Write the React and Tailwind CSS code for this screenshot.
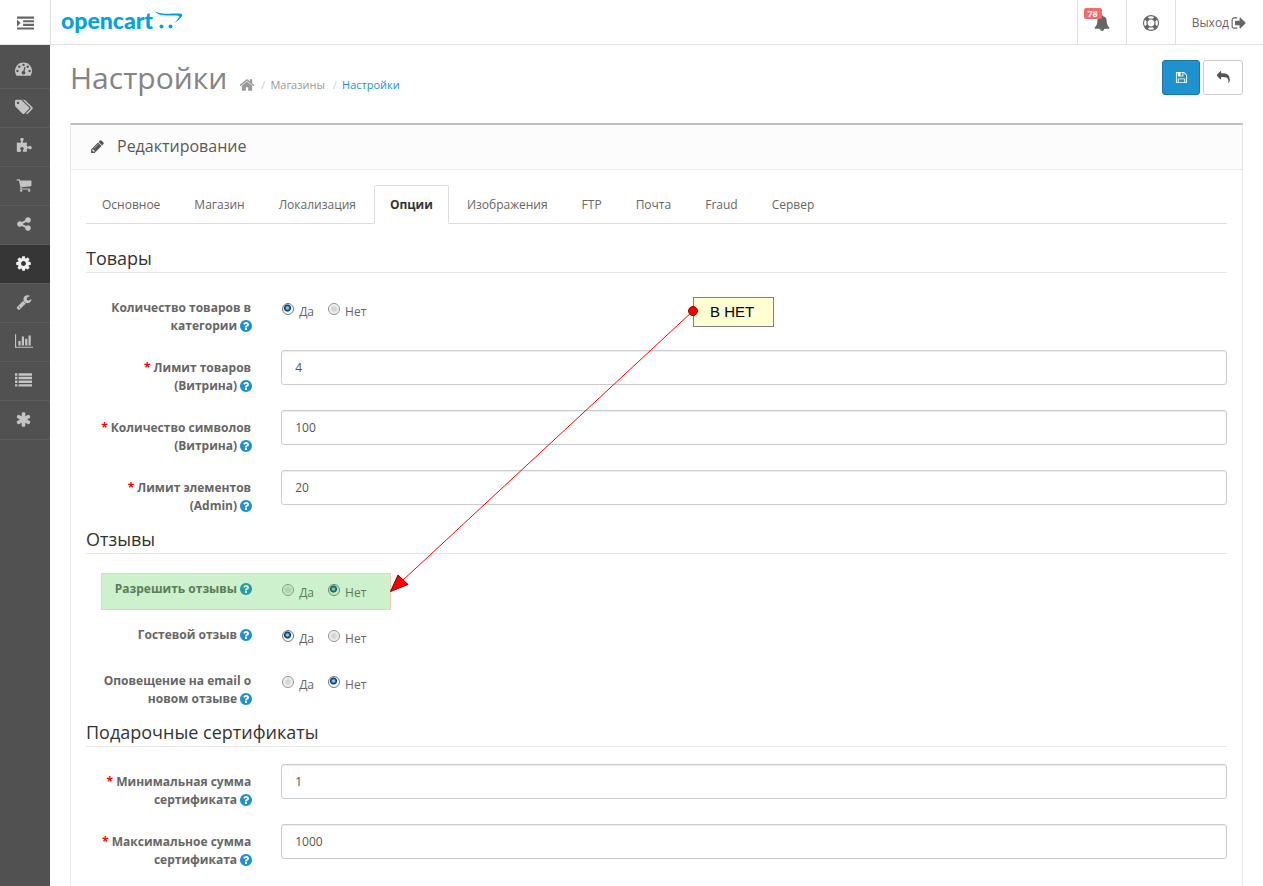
import { useState } from "react";

const icons = {
  dashboard: "M384 1152q0-53-37.5-90.5t-90.5-37.5-90.5 37.5-37.5 90.5 37.5 90.5 90.5 37.5 90.5-37.5 37.5-90.5zm192-448q0-53-37.5-90.5t-90.5-37.5-90.5 37.5-37.5 90.5 37.5 90.5 90.5 37.5 90.5-37.5 37.5-90.5zm428 481l101-382q6-26-7.5-48.5t-38.5-29.5-48 6.5-30 39.5l-101 382q-60 5-107 43.5t-63 98.5q-20 77 20 146t117 89 146-20 89-117q16-60-6-117t-72-91zm660-33q0-53-37.5-90.5t-90.5-37.5-90.5 37.5-37.5 90.5 37.5 90.5 90.5 37.5 90.5-37.5 37.5-90.5zm-640-640q0-53-37.5-90.5t-90.5-37.5-90.5 37.5-37.5 90.5 37.5 90.5 90.5 37.5 90.5-37.5 37.5-90.5zm448 192q0-53-37.5-90.5t-90.5-37.5-90.5 37.5-37.5 90.5 37.5 90.5 90.5 37.5 90.5-37.5 37.5-90.5zm320 448q0 261-141 483-19 29-54 29h-1402q-35 0-54-29-141-221-141-483 0-182 71-348t191-286 286-191 348-71 348 71 286 191 191 286 71 348z",
  tags: "M448 448q0-53-37.5-90.5t-90.5-37.5-90.5 37.5-37.5 90.5 37.5 90.5 90.5 37.5 90.5-37.5 37.5-90.5zm1067 576q0 53-37 90l-491 492q-39 37-91 37-53 0-90-37l-715-716q-38-37-64.5-101t-26.5-117v-416q0-52 38-90t90-38h416q53 0 117 26.5t102 64.5l715 714q37 39 37 91zm384 0q0 53-37 90l-491 492q-39 37-91 37-36 0-59-14t-53-45l470-470q37-37 37-90 0-52-37-91l-715-714q-38-38-102-64.5t-117-26.5h224q53 0 117 26.5t102 64.5l715 714q37 39 37 91z",
  puzzle: "M1755 1083q0 81-44.5 135t-123.5 54q-41 0-77.5-17.5t-59-38-56.5-38-71-17.5q-110 0-110 124 0 39 16 115t15 115v5q-22 0-33 1-34 3-97.5 11.5t-115.5 13.5-98 5q-61 0-103-26.5t-42-83.5q0-37 17.5-71t38-56.5 38-59 17.5-77.5q0-79-54-123.5t-135-44.5q-84 0-143 45.5t-59 127.5q0 43 15 83t33.5 64.5 33.5 53 15 50.5q0 45-46 89-37 35-117 35-95 0-245-24-9-2-27.5-4t-27.5-4l-13-2q-1 0-3-1-2 0-2-1v-1024q2 1 17.5 3.5t34 5 21.5 3.5q150 24 245 24 80 0 117-35 46-44 46-89 0-22-15-50.5t-33.5-53-33.5-64.5-15-83q0-82 59-127.5t144-45.5q80 0 134 44.5t54 123.5q0 41-17.5 77.5t-38 59-38 56.5-17.5 71q0 57 42 83.5t103 26.5q64 0 180-15t163-17v2q-1 2-3.5 17.5t-5 34-3.5 21.5q-24 150-24 245 0 80 35 117 44 46 89 46 22 0 50.5-15t53-33.5 64.5-33.5 83-15q82 0 127.5 59t45.5 143z",
  cart: "M704 1536q0 52-38 90t-90 38-90-38-38-90 38-90 90-38 90 38 38 90zm896 0q0 52-38 90t-90 38-90-38-38-90 38-90 90-38 90 38 38 90zm128-1088v512q0 24-16.5 42.5t-40.5 21.5l-1044 122q13 60 13 70 0 16-24 64h920q26 0 45 19t19 45-19 45-45 19h-1024q-26 0-45-19t-19-45q0-11 8-31.5t16-36 21.5-40 15.5-29.5l-177-823h-204q-26 0-45-19t-19-45 19-45 45-19h256q16 0 28.5 6.5t19.5 15.5 13 24.5 8 26 5.5 29.5 4.5 26h1201q26 0 45 19t19 45z",
  share: "M1344 1024q133 0 226.5 93.5t93.5 226.5-93.5 226.5-226.5 93.5-226.5-93.5-93.5-226.5q0-12 2-34l-360-180q-92 86-218 86-133 0-226.5-93.5t-93.5-226.5 93.5-226.5 226.5-93.5q126 0 218 86l360-180q-2-22-2-34 0-133 93.5-226.5t226.5-93.5 226.5 93.5 93.5 226.5-93.5 226.5-226.5 93.5q-126 0-218-86l-360 180q2 22 2 34t-2 34l360 180q92-86 218-86z",
  cog: "M1152 896q0-106-75-181t-181-75-181 75-75 181 75 181 181 75 181-75 75-181zm512-109v222q0 12-8 23t-20 13l-185 28q-19 54-39 91 35 50 107 138 10 12 10 25t-9 23q-27 37-99 108t-94 71q-12 0-26-9l-138-108q-44 23-91 38-16 136-29 186-7 28-36 28h-222q-14 0-24.5-8.5t-11.5-21.5l-28-184q-49-16-90-37l-141 107q-10 9-25 9-14 0-25-11-126-114-165-168-7-10-7-23 0-12 8-23 15-21 51-66.5t54-70.5q-27-50-41-99l-183-27q-13-2-21-12.5t-8-23.5v-222q0-12 8-23t19-13l186-28q14-46 39-92-40-57-107-138-10-12-10-24 0-10 9-23 26-36 98.5-107.5t94.5-71.5q13 0 26 10l138 107q44-23 91-38 16-136 29-186 7-28 36-28h222q14 0 24.5 8.5t11.5 21.5l28 184q49 16 90 37l142-107q9-9 24-9 13 0 25 10 129 119 165 170 7 8 7 22 0 12-8 23-15 21-51 66.5t-54 70.5q26 50 41 98l183 28q13 2 21 12.5t8 23.5z",
  wrench: "M448 1472q0-26-19-45t-45-19-45 19-19 45 19 45 45 19 45-19 19-45zm644-420l-682 682q-37 37-90 37-52 0-91-37l-106-108q-38-36-38-90 0-53 38-91l681-681q39 98 114.5 173.5t173.5 114.5zm634-435q0 39-23 106-47 134-164.5 217.5t-258.5 83.5q-185 0-316.5-131.5t-131.5-316.5 131.5-316.5 316.5-131.5q58 0 121.5 16.5t107.5 46.5q16 11 16 28t-16 28l-293 169v224l193 107q5-3 79-48.5t135.5-81 70.5-35.5q15 0 23.5 10t8.5 25z",
  chart: "M640 896v512h-256v-512h256zm384-512v1024h-256v-1024h256zm1024 1152v128h-2048v-1536h128v1408h1920zm-640-896v768h-256v-768h256zm384-384v1152h-256v-1152h256z",
  list: "M0 128h256v256H0zM384 128h1408v256H384zM0 512h256v256H0zM384 512h1408v256H384zM0 896h256v256H0zM384 896h1408v256H384zM0 1280h256v256H0zM384 1280h1408v256H384z",
  asterisk: "M1546 1050q46 26 59.5 77.5t-12.5 97.5l-64 110q-26 46-77.5 59.5t-97.5-12.5l-266-153v307q0 52-38 90t-90 38h-128q-52 0-90-38t-38-90v-307l-266 153q-46 26-97.5 12.5t-77.5-59.5l-64-110q-26-46-12.5-97.5t59.5-77.5l266-154-266-154q-46-26-59.5-77.5t12.5-97.5l64-110q26-46 77.5-59.5t97.5 12.5l266 153v-307q0-52 38-90t90-38h128q52 0 90 38t38 90v307l266-153q46-26 97.5-12.5t77.5 59.5l64 110q26 46 12.5 97.5t-59.5 77.5l-266 154z",
  indent: "M0 160h1792v224H0zM640 544h1152v224H640zM640 928h1152v224H640zM0 1312h1792v224H0zM0 512q0-32 40-10l320 320q28 26 0 52l-320 320q-40 22-40-10z",
  bell: "M912 1696q0-16-16-16-59 0-101.5-42.5t-42.5-101.5q0-16-16-16t-16 16q0 73 51.5 124.5t124.5 51.5q16 0 16-16zm816-288q0 52-38 90t-90 38h-448q0 106-75 181t-181 75-181-75-75-181h-448q-52 0-90-38t-38-90q50-42 91-88t85-119.5 74.5-158.5 50-206 19.5-260q0-152 117-282.5t307-158.5q-8-19-8-39 0-40 28-68t68-28 68 28 28 68q0 20-8 39 190 28 307 158.5t117 282.5q0 139 19.5 260t50 206 74.5 158.5 85 119.5 91 88z",
  support: "M896 0q182 0 348 71t286 191 191 286 71 348-71 348-191 286-286 191-348 71-348-71-286-191-191-286-71-348 71-348 191-286 286-191 348-71zm0 128q-190 0-361 90l194 194q82-28 167-28t167 28l194-194q-171-90-361-90zm-678 1129l194-194q-28-82-28-167t28-167l-194-194q-90 171-90 361t90 361zm678 407q190 0 361-90l-194-194q-82 28-167 28t-167-28l-194 194q171 90 361 90zm0-384q159 0 271.5-112.5t112.5-271.5-112.5-271.5-271.5-112.5-271.5 112.5-112.5 271.5 112.5 271.5 271.5 112.5zm484-217l194 194q90-171 90-361t-90-361l-194 194q28 82 28 167t-28 167z",
  signOut: "M704 1440q0 4 1 20t.5 26.5-3 23.5-10 19.5-20.5 6.5h-320q-119 0-203.5-84.5t-84.5-203.5v-704q0-119 84.5-203.5t203.5-84.5h320q13 0 22.5 9.5t9.5 22.5q0 4 1 20t.5 26.5-3 23.5-10 19.5-20.5 6.5h-320q-66 0-113 47t-47 113v704q0 66 47 113t113 47h312l11.5 1 11.5 3 8 5.5 7 9 2 13.5zm928-544q0 26-19 45l-544 544q-19 19-45 19t-45-19-19-45v-288h-448q-26 0-45-19t-19-45v-384q0-26 19-45t45-19h448v-288q0-26 19-45t45-19 45 19l544 544q19 19 19 45z",
  save: "M512 1536h768v-384h-768v384zm896 0h128v-896q0-14-10-38.5t-20-34.5l-281-281q-10-10-34-20t-39-10v416q0 40-28 68t-68 28h-576q-40 0-68-28t-28-68v-416h-128v1280h128v-416q0-40 28-68t68-28h832q40 0 68 28t28 68v416zm-384-928v-320q0-13-9.5-22.5t-22.5-9.5h-192q-13 0-22.5 9.5t-9.5 22.5v320q0 13 9.5 22.5t22.5 9.5h192q13 0 22.5-9.5t9.5-22.5zm640 32v928q0 40-28 68t-68 28h-1344q-40 0-68-28t-28-68v-1344q0-40 28-68t68-28h928q40 0 88 20t76 48l280 280q28 28 48 76t20 88z",
  reply: "M1792 1120q0 166-127 451-3 7-10.5 24t-13.5 30-13 22q-12 17-28 17-15 0-23.5-10t-8.5-25q0-9 2.5-26.5t2.5-23.5q5-68 5-123 0-112-19.5-200.5t-54-153.5-89-112-118-78-148.5-48-173-19.5-184-5.5h-224v256q0 26-19 45t-45 19-45-19l-512-512q-19-19-19-45t19-45l512-512q19-19 45-19t45 19 19 45v256h224q713 0 875 403 53 134 53 333z",
  home: "M1472 992v480q0 26-19 45t-45 19h-384v-384h-256v384h-384q-26 0-45-19t-19-45v-480q0-1 .5-3t.5-3l575-474 575 474q1 2 1 6zm223-69l-62 74q-8 9-21 11h-3q-13 0-21-7l-692-577-692 577q-12 8-24 7-13-2-21-11l-62-74q-8-10-7-23.5t11-21.5l719-599q32-26 76-26t76 26l244 204v-195q0-14 9-23t23-9h192q14 0 23 9t9 23v408l219 182q10 8 11 21.5t-7 23.5z",
  pencil: "M491 1536l91-91-235-235-91 91v107h128v128h107zm523-928q0-22-22-22-10 0-17 7l-542 542q-7 7-7 17 0 22 22 22 10 0 17-7l542-542q7-7 7-17zm-54-192l416 416-832 832h-416v-416zm683 96q0 53-37 90l-166 166-416-416 166-165q36-38 90-38 53 0 91 38l235 234q37 39 37 91z",
  question: "M1024 1376v-192q0-14-9-23t-23-9h-192q-14 0-23 9t-9 23v192q0 14 9 23t23 9h192q14 0 23-9t9-23zm256-672q0-88-55.5-163t-138.5-116-170-41q-243 0-371 213-15 24 8 42l132 100q7 6 19 6 16 0 25-12 53-68 86-92 34-24 86-24 48 0 85.5 26t37.5 59q0 38-20 61t-68 45q-63 28-115.5 86.5t-52.5 125.5v36q0 14 9 23t23 9h192q14 0 23-9t9-23q0-19 21.5-49.5t54.5-49.5q32-18 49-28.5t46-35 44.5-48 28-60.5 12.5-81zm384 192q0 209-103 385.5t-279.5 279.5-385.5 103-385.5-103-279.5-279.5-103-385.5 103-385.5 279.5-279.5 385.5-103 385.5 103 279.5 279.5 103 385.5z",
};

const Icon = ({ name, className, viewBox = "0 0 1792 1792" }) => (
  <svg viewBox={viewBox} className={className} fill="currentColor" aria-hidden="true">
    <path d={icons[name]} />
  </svg>
);

const menu = [
  { icon: "dashboard", title: "Панель состояния", size: "size-[17px]" },
  { icon: "tags", title: "Каталог", size: "size-[18px]", viewBox: "0 0 1920 1792" },
  { icon: "puzzle", title: "Дополнения", size: "size-4" },
  { icon: "cart", title: "Продажи", size: "size-4" },
  { icon: "share", title: "Маркетинг", size: "size-4" },
  { icon: "cog", title: "Система", size: "size-[17px]", active: true },
  { icon: "wrench", title: "Инструменты", size: "size-4" },
  { icon: "chart", title: "Отчеты", size: "h-4 w-[18px]", viewBox: "0 0 2048 1792" },
  { icon: "list", title: "Список", size: "size-[17px]" },
  { icon: "asterisk", title: "Прочее", size: "size-[17px]" },
];

const tabs = ["Основное", "Магазин", "Локализация", "Опции", "Изображения", "FTP", "Почта", "Fraud", "Сервер"];

const sections = [
  {
    title: "Товары",
    fields: [
      { name: "product_count", label: "Количество товаров в категории", type: "radio" },
      { name: "product_limit", label: "Лимит товаров (Витрина)", required: true },
      { name: "description_length", label: "Количество символов (Витрина)", required: true },
      { name: "limit_admin", label: "Лимит элементов (Admin)", required: true },
    ],
  },
  {
    title: "Отзывы",
    fields: [
      { name: "review_status", label: "Разрешить отзывы", type: "radio", highlight: true },
      { name: "review_guest", label: "Гостевой отзыв", type: "radio" },
      { name: "review_mail", label: "Оповещение на email о новом отзыве", type: "radio" },
    ],
  },
  {
    title: "Подарочные сертификаты",
    fields: [
      { name: "voucher_min", label: "Минимальная сумма сертификата", required: true },
      { name: "voucher_max", label: "Максимальное сумма сертификата", required: true },
    ],
  },
];

const Help = () => (
  <Icon name="question" viewBox="128 128 1536 1536" className="-mr-px inline-block size-3 align-[-2px] text-[#1e91cf]" />
);

const Radio = ({ name, value, checked, onChange, children }) => (
  <label className="flex items-start gap-[5px]">
    <input
      type="radio"
      name={name}
      value={value}
      checked={checked}
      onChange={onChange}
      className="size-3 appearance-none rounded-full border border-[#8e8f8f] bg-[radial-gradient(circle,#d6d6d6_0_2px,#ededed_4px,#fff_5px)] checked:border-[#6b7780] checked:bg-[radial-gradient(circle_at_45%_40%,#7fd0f4_0_1px,#1f6ca6_2px,#0b2f52_3px,#e8eef2_4px,#fff_5px)]"
    />
    <span className="leading-[18px]">{children}</span>
  </label>
);

const Field = ({ field, value, onChange }) => {
  const isRadio = field.type === "radio";
  const text = (
    <>
      {field.required && <span className="text-[#f00]">* </span>}
      {field.label} <Help />
    </>
  );
  const labelClass = "block w-1/6 px-[15px] pt-[9px] text-right font-bold leading-[18px]";

  return (
    <div
      className="relative -mx-[15px] flex min-h-[31px]"
      role={isRadio ? "radiogroup" : undefined}
      aria-labelledby={isRadio ? `label-${field.name}` : undefined}
    >
      {isRadio ? (
        <span id={`label-${field.name}`} className={labelClass}>{text}</span>
      ) : (
        <label htmlFor={field.name} className={labelClass}>{text}</label>
      )}
      <div className="w-5/6 px-[15px]">
        {isRadio ? (
          <div className="flex h-[31px] gap-[14px] pt-[13px] pl-px">
            <Radio name={field.name} value="1" checked={value === "1"} onChange={() => onChange("1")}>Да</Radio>
            <Radio name={field.name} value="0" checked={value === "0"} onChange={() => onChange("0")}>Нет</Radio>
          </div>
        ) : (
          <input
            id={field.name}
            type="text"
            value={value}
            onChange={(e) => onChange(e.target.value)}
            className="block h-[35px] w-full rounded-[3px] border border-[#ccc] bg-white px-[13px] text-[#555] shadow-[inset_0_1px_1px_rgba(0,0,0,0.075)]"
          />
        )}
      </div>
      {field.highlight && (
        <div className="pointer-events-none absolute top-[2px] left-[30px] h-[37px] w-[290px] border border-[#f8cbb8] bg-[rgba(56,196,56,0.25)] bg-clip-padding" />
      )}
    </div>
  );
};

const Logo = () => (
  <a href="#" className="flex text-[#00a3df]">
    <span className="font-['Lato',sans-serif] text-[23px] leading-[26px] font-black">opencart</span>
    <svg viewBox="0 0 28 20" className="mt-1 ml-[2px] h-5 w-7" fill="currentColor" aria-hidden="true">
      <path d="M0 .4C4 2.600 12 2.900 20 2.500c5-.2 8.500.1 7 2.600-1.300 2.300-4 4.500-7.200 7 1.700-2.300 3.700-4.400 4.200-6 .5-1.300-1.500-1.500-4.500-1.500C11 4.700 2.500 4.300 0 .4z" />
      <circle cx="6.500" cy="15.500" r="2" />
      <circle cx="15.500" cy="15.500" r="2" />
    </svg>
  </a>
);

// yellow note with the arrow going down to the reviews switch
const Note = () => (
  <div className="pointer-events-none absolute top-[297px] left-[390px]">
    <div className="ml-[303px] h-[30px] w-[81px] border border-[#808080] bg-[#ffffd2] pl-4 font-['Liberation_Sans',sans-serif] text-[15px] leading-7 text-black">
      В НЕТ
    </div>
    <svg viewBox="0 0 310 300" className="absolute top-0 left-0 h-[300px] w-[310px]" aria-hidden="true">
      <path d="M303 14L12 284" stroke="#f00" strokeWidth="1" fill="none" />
      <path d="M.5 294.500L8 278l10 9.500z" fill="#f00" stroke="#700" strokeWidth="1" />
      <circle cx="303" cy="14" r="4.500" fill="#f00" stroke="#900" strokeWidth="1" />
    </svg>
  </div>
);

const App = () => {
  const [activeTab, setActiveTab] = useState("Опции");
  const [form, setForm] = useState({
    product_count: "1",
    product_limit: "4",
    description_length: "100",
    limit_admin: "20",
    review_status: "0",
    review_guest: "1",
    review_mail: "0",
    voucher_min: "1",
    voucher_max: "1000",
  });

  return (
    <div className="relative flex min-h-screen flex-col bg-white font-['Open_Sans',sans-serif] text-xs text-[#666]">
      <header className="flex h-[45px] border-b border-[#e1e1e1]">
        <button type="button" aria-label="Меню" className="flex w-[51px] items-center justify-center border-r border-[#e1e1e1] pt-[2px]">
          <Icon name="indent" className="size-[17px]" />
        </button>
        <div className="flex-1 pt-[7px] pl-[10px]">
          <Logo />
        </div>
        <button type="button" aria-label="Уведомления" className="relative flex w-[49px] items-center justify-center border-l border-[#e1e1e1] pt-[2px]">
          <Icon name="bell" className="size-4" />
          <span className="absolute top-2 left-[6px] h-[11px] w-[18px] rounded-[2px] bg-[#f56b6b] text-center text-[9px] leading-[11px] font-bold text-white">78</span>
        </button>
        <button type="button" aria-label="Помощь" className="flex w-[49px] items-center justify-center border-l border-[#e1e1e1] pt-[2px]">
          <Icon name="support" className="size-4" />
        </button>
        <a href="#" className="flex items-center gap-[2px] border-l border-[#e1e1e1] px-4 pt-[2px]">
          Выход
          <Icon name="signOut" className="size-4" />
        </a>
      </header>

      <div className="flex flex-1">
        <nav className="w-[50px] shrink-0 bg-[#515151] pt-[5px]">
          <ul>
            {menu.map((item) => (
              <li key={item.icon} className="border-b border-[#5c5c5c]">
                <a
                  href="#"
                  aria-label={item.title}
                  className={`flex h-[38px] items-center justify-center pr-[3px] pb-[2px] ${item.active ? "bg-[#363636] text-[#f0f0f0]" : "text-[#c4c4c4]"}`}
                >
                  <Icon name={item.icon} viewBox={item.viewBox} className={item.size} />
                </a>
              </li>
            ))}
          </ul>
        </nav>

        <main className="flex min-w-0 flex-1 flex-col px-5 pt-[15px]">
          <div className="flex h-[63px] items-start">
            <h1 className="text-[30px] leading-9 text-[#848484]">Настройки</h1>
            <nav className="flex items-center pt-[17px] pl-3 text-[11px] leading-4 text-[#999]">
              <a href="#" aria-label="Главная"><Icon name="home" className="size-4" /></a>
              <span className="px-[5px] pl-[6px] text-[#ccc]">/</span>
              <a href="#">Магазины</a>
              <span className="pr-[5px] pl-2 text-[#ccc]">/</span>
              <a href="#" className="text-[#1e91cf]">Настройки</a>
            </nav>
            <div className="ml-auto flex gap-[3px]">
              <button type="submit" form="form-setting" aria-label="Сохранить" className="flex h-[35px] w-[38px] items-center justify-center rounded-[3px] border border-[#1978ab] bg-[#1e91cf] text-white">
                <Icon name="save" className="size-[13px]" />
              </button>
              <a href="#" aria-label="Назад" className="flex h-[35px] w-10 items-center justify-center rounded-[3px] border border-[#ccc] text-[#555]">
                <Icon name="reply" className="size-[13px]" />
              </a>
            </div>
          </div>

          <div className="flex-1 border-x border-t-2 border-x-[#e8e8e8] border-t-[#bfbfbf]">
            <div className="flex h-[45px] items-center gap-3 border-b border-[#e8e8e8] bg-[#fcfcfc] pb-[2px] pl-[19px]">
              <Icon name="pencil" className="size-[15px] text-[#555]" />
              <h3 className="text-base leading-5 text-[#595959]">Редактирование</h3>
            </div>

            <form id="form-setting" onSubmit={(e) => e.preventDefault()} className="p-[15px]">
              <div role="tablist" className="flex gap-[2px] border-b border-[#ddd]">
                {tabs.map((tab) => (
                  <button
                    key={tab}
                    type="button"
                    role="tab"
                    aria-selected={tab === activeTab}
                    onClick={() => setActiveTab(tab)}
                    className={`-mb-px h-[39px] rounded-t-[2px] border px-[15px] leading-[18px] ${tab === activeTab ? "border-[#ddd] border-b-white bg-white font-bold text-[#333]" : "border-transparent"}`}
                  >
                    {tab}
                  </button>
                ))}
              </div>

              <div className="flex flex-col gap-[10px] pt-5">
                {sections.map((section) => (
                  <section key={section.title}>
                    <h4 className="mb-[17px] border-b border-[#e5e5e5] text-lg leading-7 text-[#333]">{section.title}</h4>
                    <div className="flex flex-col gap-[15px]">
                      {section.fields.map((field) => (
                        <Field
                          key={field.name}
                          field={field}
                          value={form[field.name]}
                          onChange={(value) => setForm({ ...form, [field.name]: value })}
                        />
                      ))}
                    </div>
                  </section>
                ))}
              </div>
            </form>
          </div>
        </main>
      </div>

      <Note />
    </div>
  );
};

export default App;
